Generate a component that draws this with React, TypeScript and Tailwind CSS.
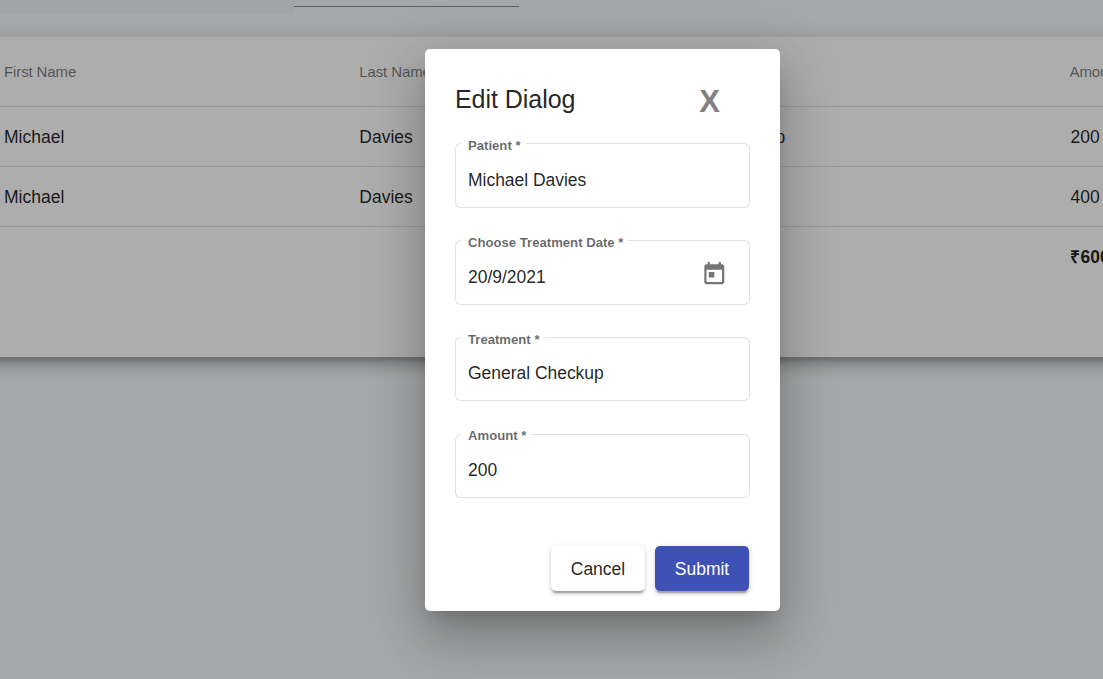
import type { ReactNode } from "react";

const columns = ["First Name", "Last Name", "Treatment", "Amount"];

const rows = [
  ["Michael", "Davies", "Checkup", "200"],
  ["Michael", "Davies", "", "400"],
];

function TodayIcon() {
  return (
    <svg viewBox="0 0 24 24" className="mt-[4px] size-[26.6px] fill-[#757575]" aria-hidden="true">
      <path d="M19 3h-1V1h-2v2H8V1H6v2H5c-1.11 0-1.99.9-1.99 2L3 19c0 1.1.89 2 2 2h14c1.1 0 2-.9 2-2V5c0-1.1-.9-2-2-2zm0 16H5V8h14v11zM7 10h5v5H7z" />
    </svg>
  );
}

function Field({ label, value, action }: { label: string; value: string; action?: ReactNode }) {
  return (
    <div className="relative flex h-[64.67px] items-center justify-between pl-[13px] pr-[22.7px]">
      <div className="pointer-events-none absolute inset-0 flex">
        <div className="w-[6px] rounded-l-[6px] border border-r-0 border-[#e0e0e0]" />
        <div className="border-b border-[#e0e0e0] pl-[7px] pr-[5px]">
          <span className="-mt-[5.2px] block whitespace-nowrap text-[13.13px] font-bold leading-[16px] text-black/60">
            {label} *
          </span>
        </div>
        <div className="flex-1 rounded-r-[6px] border border-l-0 border-[#e0e0e0]" />
      </div>
      <span className="pt-[8.7px] text-[17.5px] leading-5 tracking-[-0.03px] text-black/87">{value}</span>
      {action}
    </div>
  );
}

export default function App() {
  return (
    <div className="relative h-[679px] w-[1103px] overflow-hidden bg-[#f4f6f8] font-['Liberation_Sans',Arial,sans-serif]">
      <div className="flex h-[37px]">
        <div className="h-[14px] w-[294px] bg-[#f1f2f4]" />
        <div className="h-[7px] w-[225px] border-b border-[#8b8c8d]" />
      </div>

      <div className="-ml-[20px] h-[320px] w-[1460px] bg-white pl-[20px] shadow-[0_6.25px_6.25px_-3.75px_rgba(0,0,0,0.2),0_10px_12.5px_1.25px_rgba(0,0,0,0.14),0_3.75px_17.5px_2.5px_rgba(0,0,0,0.12)]">
        <div className="grid h-[70px] grid-cols-[355.3px_354px_356.3px_355.3px] items-center border-b border-[#e0e0e0] pl-[4px] pt-[2px] text-[15px] tracking-[-0.12px] text-black/54">
          {columns.map((c) => (
            <span key={c}>{c}</span>
          ))}
        </div>
        {rows.map((row, i) => (
          <div
            key={i}
            className="grid h-[60px] grid-cols-[355.3px_356.8px_354.4px_355.3px] items-center border-b border-[#e0e0e0] pl-[4px] pt-[2px] text-[17.5px] text-black/87"
          >
            {row.map((cell, j) => (
              <span key={j}>{cell}</span>
            ))}
          </div>
        ))}
        <div className="grid h-[60px] grid-cols-[355.3px_356.8px_354.4px_355.3px] items-center pl-[4px] text-[17.5px] font-bold text-black/87">
          <span className="col-start-4">₹600</span>
        </div>
      </div>

      <div className="absolute inset-0 flex items-start bg-black/32 pl-[425px] pt-[49px]">
        <div
          role="dialog"
          className="flex h-[562px] w-[355px] flex-col rounded-[5px] bg-white px-[30px] shadow-[0_13.75px_18.75px_-8.75px_rgba(0,0,0,0.2),0_30px_47.5px_3.75px_rgba(0,0,0,0.14),0_11.25px_57.5px_10px_rgba(0,0,0,0.12)]"
        >
          <div className="flex h-[94px] items-start justify-between pr-[30px] pt-[30px]">
            <h1 className="text-[25px] leading-[40px] tracking-[-0.05px] text-black/87">Edit Dialog</h1>
            <button className="text-[31px] font-bold leading-[46px] text-[#808080]">X</button>
          </div>
          <div className="flex flex-col gap-[32.22px]">
            <Field label="Patient" value="Michael Davies" />
            <Field label="Choose Treatment Date" value="20/9/2021" action={<TodayIcon />} />
            <Field label="Treatment" value="General Checkup" />
            <Field label="Amount" value="200" />
          </div>
          <div className="mt-[47.7px] flex justify-end gap-[10px] pr-[1px]">
            <button className="h-[45px] w-[94px] rounded-[5px] bg-white pt-[1.5px] text-[17.5px] text-black/87 shadow-[0_3.75px_1.25px_-2.5px_rgba(0,0,0,0.2),0_2.5px_2.5px_0_rgba(0,0,0,0.14),0_1.25px_6.25px_0_rgba(0,0,0,0.12)]">
              Cancel
            </button>
            <button className="h-[45px] w-[94px] rounded-[5px] bg-[#3f51b5] pt-[1.5px] text-[17.5px] text-white shadow-[0_3.75px_1.25px_-2.5px_rgba(0,0,0,0.2),0_2.5px_2.5px_0_rgba(0,0,0,0.14),0_1.25px_6.25px_0_rgba(0,0,0,0.12)]">
              Submit
            </button>
          </div>
        </div>
      </div>
    </div>
  );
}
